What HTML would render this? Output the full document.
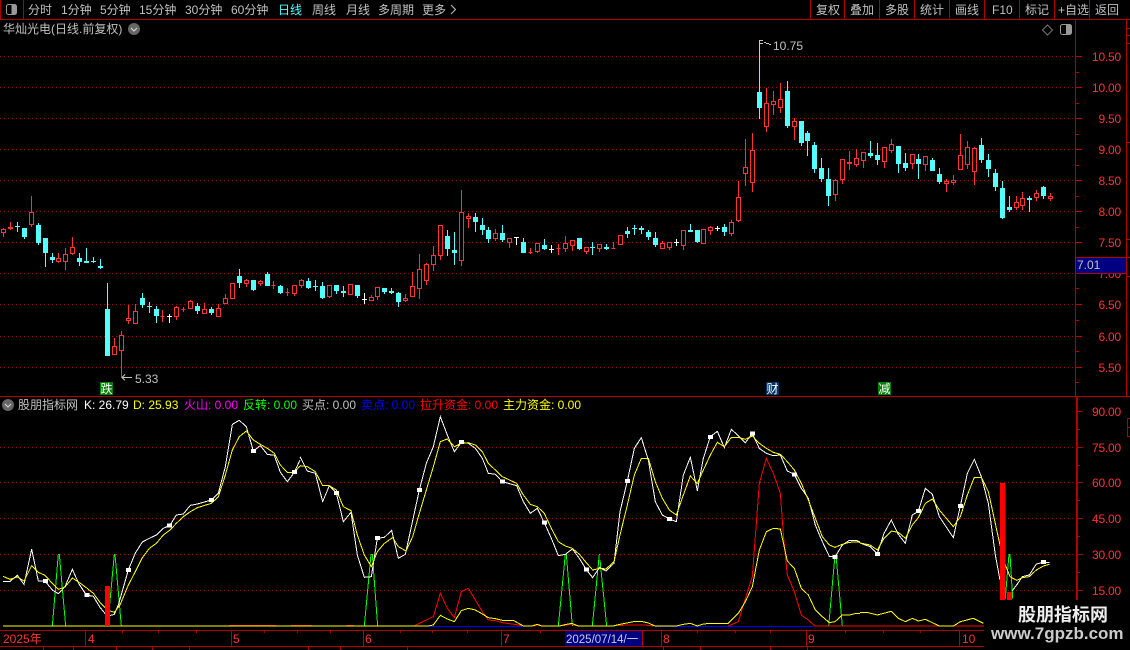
<!DOCTYPE html>
<html lang="zh">
<head>
<meta charset="utf-8">
<title>华灿光电</title>
<style>
html,body{margin:0;padding:0;background:#000;width:1130px;height:650px;overflow:hidden}
svg{display:block}
text{font-family:"Liberation Sans","WenQuanYi Zen Hei","Noto Sans CJK SC",sans-serif;font-size:12px;fill:#c0c0c0}
.tb{font-size:12px}
.rb{font-size:12px}
.ax{fill:#ff3232;text-anchor:end;letter-spacing:-.2px}
.l{fill:none;stroke-width:1;vector-effect:non-scaling-stroke}
.w{stroke:#fff}.y{stroke:#ff0}.r{stroke:#f00}.g{stroke:#0f0}.b{stroke:#00f}
.grid{stroke:#a00000;stroke-dasharray:1 3;fill:none}
.lab{font-size:12px}
</style>
</head>
<body>
<svg width="1130" height="650" viewBox="0 0 1130 650" xmlns="http://www.w3.org/2000/svg">
<rect width="1130" height="650" fill="#000"/>

<g shape-rendering="crispEdges">
<path class="grid" d="M0 56.5H1075M0 87.5H1075M0 118.5H1075M0 149.5H1075M0 180.5H1075M0 211.5H1075M0 242.5H1075M0 273.5H1075M0 304.5H1075M0 336.5H1075M0 367.5H1075"/>
<path class="grid" d="M0 447.5H1075M0 482.5H1075M0 518.5H1075M0 554.5H1075M0 590.5H1075"/>
<!-- frame -->
<path fill="none" stroke="#b00000" d="M0 19.5H1130M0.5 0V19M23.5 0V19M810.5 0V19M844.5 0V19M879.5 0V19M914.5 0V19M949.5 0V19M984.5 0V19M1019.5 0V19M1054.5 0V19M1089.5 0V19"/>
<path fill="none" stroke="#b00000" d="M1075.5 19V396M1126.5 19V396M0 396.5H1130M0 630.5H1130M0 646.5H1130"/>
<path fill="none" stroke="#b00000" stroke-width="2" d="M1077 396V630"/>
<path fill="none" stroke="#b00000" d="M1127 28.5h3M1127 35.5h3M1127 43.5h3M1127 142.5h3M1127 239.5h3M1127 257.5h3M1127 276.5h3M1127 418.5h3M1127 427.5h3M1127 436.5h3M1127.5 418V437"/>
<!-- axis ticks -->
<path fill="none" stroke="#b00000" d="M1076 56.5h6M1076 87.5h6M1076 118.5h6M1076 149.5h6M1076 180.5h6M1076 211.5h6M1076 242.5h6M1076 304.5h6M1076 336.5h6M1076 367.5h6M1076 72.5h3M1076 103.5h3M1076 134.5h3M1076 165.5h3M1076 196.5h3M1076 227.5h3M1076 288.5h3M1076 320.5h3M1076 351.5h3M1076 382.5h3"/>
<path fill="none" stroke="#b00000" d="M1078 411.5h5M1078 447.5h5M1078 482.5h5M1078 518.5h5M1078 554.5h5M1078 590.5h5M1078 429.5h2M1078 465.5h2M1078 500.5h2M1078 536.5h2M1078 572.5h2M1078 608.5h2"/>
<!-- time axis ticks -->
<path fill="none" stroke="#b00000" d="M85.5 630V646M231.5 630V646M363.5 630V646M501.5 630V646M661.5 630V646M806.5 630V646M959.5 630V646"/>
<path fill="none" stroke="#b00000" d="M122.5 630v3M158.5 630v3M196.5 630v3M264.5 630v3M297.5 630v3M330.5 630v3M400.5 630v3M432.5 630v3M467.5 630v3M540.5 630v3M575.5 630v3M642.5 630v16M697.5 630v3M735.5 630v3M770.5 630v3M845.5 630v3M883.5 630v3M920.5 630v3M43.5 646v4M73.5 646v4M116.5 646v4M152.5 646v4M189.5 646v4M308.5 646v4M340.5 646v4M407.5 646v4M663.5 646v4M700.5 646v4M770.5 646v4M807.5 646v4"/>

<!-- candles: white -->
<path fill="none" stroke="#fff" d="M169.5 314V323M167 316.5h5M364.5 293V304M362 299.5h5M516.5 237V245M514 237.5h5M551.5 245V253M549 249.5h5M676.5 239V246M674 242.5h5M717.5 226V231M715 228.5h5"/>

<!-- candles: cyan wicks -->
<path fill="none" stroke="#54ffff" d="M17.5 222V232M24.5 228V239M38.5 223V245M45.5 238V267M52.5 253V263M79.5 253V266M86.5 248V263M93.5 257V263M100.5 259V269M107.5 283V356M142.5 293V308M149.5 302V313M156.5 306V323M197.5 303V314M211.5 307V315M239.5 269V288M253.5 280V291M267.5 272V286M280.5 285V294M308.5 278V289M315.5 280V291M322.5 282V299M336.5 285V294M343.5 286V297M357.5 285V298M384.5 288V294M391.5 288V294M398.5 292V307M447.5 230V256M454.5 232V265M475.5 213V232M482.5 218V235M488.5 227V243M502.5 225V242M523.5 238V253M544.5 239V250M579.5 238V250M592.5 242V255M606.5 244V250M627.5 227V238M634.5 225V235M641.5 226V234M648.5 230V240M655.5 232V247M690.5 224V232M697.5 230V243M724.5 224V236M759.5 40V119M787.5 81V128M801.5 121V146M807.5 131V156M814.5 142V173M821.5 158V182M828.5 168V206M870.5 141V158M877.5 143V165M898.5 146V173M905.5 153V171M918.5 154V179M932.5 158V171M939.5 168V184M981.5 138V163M988.5 154V177M995.5 169V191M1002.5 181V219M1009.5 196V212M1029.5 196V212M1043.5 186V199"/>
<!-- candles: cyan bodies -->
<path fill="#54ffff" d="M15 226h5v1h-5zM22 228h5v9h-5zM36 225h5v18h-5zM43 238h5v15h-5zM50 257h5v3h-5zM77 258h5v4h-5zM84 261h5v2h-5zM91 261h5v1h-5zM98 266h5v2h-5zM105 309h5v47h-5zM140 298h5v7h-5zM147 306h5v1h-5zM154 309h5v7h-5zM195 306h5v5h-5zM209 309h5v4h-5zM237 276h5v7h-5zM251 280h5v10h-5zM265 274h5v12h-5zM278 286h5v7h-5zM306 281h5v7h-5zM313 286h5v1h-5zM320 286h5v12h-5zM334 285h5v6h-5zM341 291h5v2h-5zM355 285h5v11h-5zM382 288h5v4h-5zM389 291h5v2h-5zM396 293h5v9h-5zM445 236h5v13h-5zM452 250h5v3h-5zM473 217h5v5h-5zM480 225h5v5h-5zM486 230h5v9h-5zM500 233h5v7h-5zM521 242h5v11h-5zM542 245h5v4h-5zM577 238h5v11h-5zM590 247h5v1h-5zM604 247h5v2h-5zM625 231h5v3h-5zM632 228h5v1h-5zM639 228h5v2h-5zM646 232h5v5h-5zM653 238h5v7h-5zM688 230h5v2h-5zM695 230h5v12h-5zM722 227h5v5h-5zM757 92h5v16h-5zM785 91h5v35h-5zM799 121h5v22h-5zM805 133h5v8h-5zM812 145h5v24h-5zM819 168h5v11h-5zM826 179h5v17h-5zM868 153h5v3h-5zM875 155h5v5h-5zM896 146h5v18h-5zM903 163h5v5h-5zM916 159h5v5h-5zM930 160h5v11h-5zM937 174h5v8h-5zM979 145h5v15h-5zM986 160h5v9h-5zM993 173h5v14h-5zM1000 188h5v30h-5zM1007 207h5v3h-5zM1027 198h5v2h-5zM1041 187h5v9h-5z"/>

<!-- candles: red wicks -->
<path fill="none" stroke="#ff3232" d="M3.5 228V237M10.5 222V230M31.5 196V227M58.5 253V263M65.5 248V270M72.5 237V255M114.5 338V355M121.5 331V378M128.5 305V324M135.5 304V324M162.5 310V322M176.5 306V320M183.5 307V312M190.5 300V309M204.5 303V314M218.5 304V317M225.5 294V304M232.5 283V299M246.5 279V287M260.5 280V286M273.5 281V289M287.5 288V296M294.5 285V296M301.5 279V288M329.5 285V298M350.5 284V295M371.5 295V301M377.5 287V300M405.5 294V302M412.5 272V297M419.5 254V299M426.5 263V285M433.5 246V271M440.5 225V260M461.5 190V266M468.5 213V228M495.5 229V241M509.5 238V248M530.5 248V254M537.5 243V253M558.5 244V255M565.5 236V252M572.5 240V251M586.5 247V254M599.5 244V252M613.5 242V249M620.5 235V245M662.5 241V249M669.5 242V250M683.5 230V250M703.5 229V244M710.5 226V235M731.5 220V236M738.5 181V222M745.5 139V186M752.5 133V192M766.5 88V132M773.5 91V115M780.5 83V113M794.5 118V140M835.5 179V201M842.5 159V184M849.5 151V170M856.5 149V167M863.5 152V168M884.5 147V168M891.5 139V153M912.5 154V169M925.5 156V171M946.5 179V192M953.5 175V185M960.5 134V170M967.5 141V169M974.5 147V185M1016.5 196V210M1022.5 192V210M1036.5 190V201M1050.5 193V201"/>
<!-- candles: red bodies -->
<path fill="#000" stroke="#ff3232" d="M1.5 229.5h4v3h-4zM8.5 227.5h4v1h-4zM29.5 212.5h4v12h-4zM56.5 258.5h4v3h-4zM63.5 254.5h4v7h-4zM70.5 247.5h4v6h-4zM112.5 346.5h4v8h-4zM119.5 335.5h4v15h-4zM126.5 318.5h4v2h-4zM133.5 311.5h4v12h-4zM160.5 316.5h4v0h-4zM174.5 307.5h4v9h-4zM181.5 309.5h4v0h-4zM188.5 301.5h4v7h-4zM202.5 309.5h4v4h-4zM216.5 308.5h4v8h-4zM223.5 298.5h4v5h-4zM230.5 283.5h4v15h-4zM244.5 280.5h4v3h-4zM258.5 281.5h4v2h-4zM271.5 285.5h4v0h-4zM285.5 292.5h4v0h-4zM292.5 285.5h4v8h-4zM299.5 280.5h4v5h-4zM327.5 285.5h4v11h-4zM348.5 284.5h4v10h-4zM369.5 297.5h4v3h-4zM375.5 287.5h4v9h-4zM403.5 298.5h4v2h-4zM410.5 286.5h4v10h-4zM417.5 269.5h4v19h-4zM424.5 264.5h4v16h-4zM431.5 255.5h4v9h-4zM438.5 225.5h4v30h-4zM459.5 212.5h4v48h-4zM466.5 216.5h4v2h-4zM493.5 233.5h4v5h-4zM507.5 238.5h4v4h-4zM528.5 252.5h4v0h-4zM535.5 243.5h4v8h-4zM556.5 248.5h4v0h-4zM563.5 243.5h4v5h-4zM570.5 240.5h4v5h-4zM584.5 247.5h4v4h-4zM597.5 244.5h4v4h-4zM611.5 248.5h4v0h-4zM618.5 235.5h4v9h-4zM660.5 243.5h4v5h-4zM667.5 242.5h4v5h-4zM681.5 230.5h4v15h-4zM701.5 229.5h4v14h-4zM708.5 227.5h4v3h-4zM729.5 222.5h4v11h-4zM736.5 197.5h4v23h-4zM743.5 167.5h4v6h-4zM750.5 150.5h4v32h-4zM764.5 103.5h4v23h-4zM771.5 101.5h4v3h-4zM778.5 99.5h4v8h-4zM792.5 121.5h4v5h-4zM833.5 180.5h4v14h-4zM840.5 159.5h4v20h-4zM847.5 162.5h4v1h-4zM854.5 158.5h4v6h-4zM861.5 152.5h4v8h-4zM882.5 147.5h4v14h-4zM889.5 144.5h4v6h-4zM910.5 154.5h4v9h-4zM923.5 156.5h4v8h-4zM944.5 181.5h4v2h-4zM951.5 180.5h4v2h-4zM958.5 155.5h4v14h-4zM965.5 147.5h4v17h-4zM972.5 148.5h4v23h-4zM1014.5 202.5h4v5h-4zM1020.5 198.5h4v7h-4zM1034.5 193.5h4v4h-4zM1048.5 196.5h4v2h-4z"/>

<!-- 7.01 current price box -->
<text class="ax" x="1121" y="278">7.00</text>
<rect x="1075.5" y="257.5" width="51" height="16" fill="#000080" stroke="#b00000"/>

<!-- signal tags -->
<rect x="100" y="382" width="13" height="13" fill="#008000"/>
<rect x="766" y="382" width="13" height="13" fill="#003366"/>
<rect x="878" y="382" width="13" height="13" fill="#008000"/>

<!-- price callouts -->
<path fill="none" stroke="#c0c0c0" d="M760 40.5h3M760 43.5h3M764 42.5h2M766 43.5h3M769 44.5h2"/>
<path fill="none" stroke="#c0c0c0" d="M122 377.5h10M122 377.5l3-3M122 377.5l3 3"/>

<!-- lower panel: segment 1 -->
<g transform="translate(0,395) scale(.33333)">
<polyline class="l g" points="157,693 175,478 178,478 197,693"/>
<polyline class="l g" points="323,693 343,478 345,478 364,693"/>
<path class="l r" d="M687 691H750M750 691H830M873 691H900"/>
<polyline class="l y" points="9,693 900,693"/>
<polyline class="l w" points="9,559 30,559 52,541 72,568 95,463 115,558 135,558 157,585 175,596 195,575 217,523 237,567 259,600 280,604 300,637 322,664 343,658 355,630 385,525 406,474 427,441 448,430 469,420 490,400 510,391 529,360 550,357 571,331 592,327 634,315 655,295 676,215 697,88 718,76 739,95 760,168 781,152 802,178 823,181 841,232 862,260 883,232 900,195"/>
<polyline class="l y" points="9,544 30,553 52,546 72,558 95,512 115,532 135,541 157,565 175,583 195,576 217,549 237,562 259,578 280,595 300,622 322,645 343,652 360,630 385,570 406,530 427,488 448,460 469,445 490,420 510,405 529,385 550,365 571,350 592,338 634,325 655,305 676,240 697,165 718,125 739,108 760,135 781,148 802,160 823,175 841,210 862,232 883,232 900,213"/>
<path fill="#fff" d="M129 552h15v12h-15zM253 594h15v12h-15zM378 519h15v12h-15zM501 386h15v12h-15zM627 309h15v12h-15zM753 162h15v12h-15zM876 225h15v12h-15z"/>
<rect x="315" y="573" width="15" height="120" fill="#f00"/>
</g>

<!-- lower panel: segment 2 -->
<g transform="translate(300,395) scale(.33333)">
<polyline class="l g" points="193,693 213,478 217,478 233,693"/>
<polyline class="l g" points="775,693 796,478 799,478 817,693"/>
<polyline class="l g" points="877,693 898,478 900,478"/>
<path class="l r" d="M0 691H35M140 691H160"/>
<polyline class="l r" points="342,693 400,665 421,595 442,640 463,668 484,590 505,580 526,615 547,650 565,675 586,677 607,683 650,689 670,693 700,693 712,690 725,693 778,693 800,690 815,688 830,693"/>
<polyline class="l b" points="385,694 670,694"/>
<polyline class="l y" points="0,693 385,693 400,690 421,661 442,672 463,680 484,647 505,640 526,645 547,657 565,668 586,671 607,676 640,676 670,693 695,693 712,688 725,693 778,693 800,688 815,685 835,693 900,693"/>
<polyline class="l w" points="0,185 22,228 46,235 68,320 88,272 109,294 130,380 153,352 172,480 193,547 214,545 232,430 253,427 275,406 295,490 316,478 358,285 379,205 400,155 421,65 442,120 463,170 484,142 505,145 526,160 547,190 565,235 586,238 607,260 650,272 670,320 691,355 712,340 733,383 754,430 775,482 796,478 817,462 838,490 859,524 878,548 900,515"/>
<polyline class="l y" points="0,212 22,215 46,230 68,272 88,272 109,285 130,335 153,347 172,420 193,480 214,515 232,470 253,445 278,428 295,455 318,468 338,425 358,355 379,285 400,215 421,140 442,132 463,155 484,145 505,143 526,150 547,170 565,205 586,225 607,245 650,265 670,300 691,328 712,335 733,355 754,400 775,440 796,453 817,460 838,478 859,503 878,525 900,520"/>
<path fill="#fff" d="M102 288h15v12h-15zM225 423h15v12h-15zM351 279h15v12h-15zM477 135h15v12h-15zM600 254h15v12h-15zM726 377h15v12h-15zM852 518h15v12h-15z"/>
</g>

<!-- lower panel: segment 3 -->
<g transform="translate(600,395) scale(.33333)">
<polyline class="l g" points="0,495 20,693"/>
<polyline class="l g" points="686,693 705,480 708,480 727,693"/>
<polyline class="l b" points="165,694 640,694"/>
<polyline class="l r" points="55,692 75,690 135,690 160,693"/>
<polyline class="l r" points="385,693 415,680 436,610 457,545 478,265 499,190 520,235 541,295 551,430 562,540 583,590 604,660 625,675 645,693 780,693"/>
<polyline class="l y" points="0,693 40,693 60,688 100,680 124,679 145,684 165,693 230,693 250,688 271,685 292,693 310,687 331,685 360,685 385,685 415,655 436,620 457,575 478,465 499,410 520,400 541,402 562,498 583,520 604,580 625,600 646,645 667,665 688,683 705,680 727,660 748,660 769,655 780,655"/>
<polyline class="l w" points="0,518 18,528 42,505 60,350 82,258 103,160 124,128 145,195 166,320 187,360 208,372 229,380 250,240 271,187 292,287 310,190 331,125 352,109 373,158 394,103 415,122 436,143 457,116 478,160 499,175 520,182 541,180 562,228 583,238 604,280 625,310 646,390 667,440 688,484 705,486 727,450 748,436 769,436 780,441"/>
<polyline class="l y" points="0,520 18,522 42,500 60,420 82,330 103,240 124,190 145,190 166,260 187,310 208,345 229,360 250,300 271,243 292,265 310,225 331,180 352,142 373,155 394,127 415,127 436,133 457,123 478,145 499,160 520,172 541,178 562,200 583,225 604,265 625,315 646,370 667,425 688,450 705,457 727,448 748,442 769,441 780,442"/>
<path fill="#fff" d="M75 252h15v12h-15zM201 366h15v12h-15zM324 120h15v12h-15zM450 109h15v12h-15zM576 232h15v12h-15zM698 480h15v12h-15z"/>
</g>

<!-- lower panel: segment 4 -->
<g transform="translate(860,395) scale(.33333)">
<polyline class="l r" points="0,693 372,693"/>
<polyline class="l g" points="436,610 447,478 450,478 458,610"/>
<polyline class="l y" points="0,652 20,652 52,660 94,649 115,670 136,680 157,670 175,678 196,673 238,693 280,693 301,680 340,670 370,685"/>
<polyline class="l w" points="0,444 30,455 52,477 72,415 94,375 115,418 136,445 157,360 175,349 196,280 217,298 238,365 280,428 301,333 322,235 343,193 364,245 385,325 406,480 420,555"/>
<polyline class="l w" points="457,587 470,570 487,545 508,540 529,507 550,502 568,503"/>
<polyline class="l y" points="0,444 30,450 52,465 72,430 94,408 115,412 136,430 157,390 175,368 196,325 217,312 238,345 280,395 301,365 322,300 343,247 364,247 385,290 420,450 436,510 450,545 470,556 487,548 508,545 529,525 550,513 568,508"/>
<path fill="#fff" d="M45 471h15v12h-15zM168 342h15v12h-15zM294 327h15v12h-15zM543 495h15v12h-15z"/>
<rect x="420" y="264" width="16" height="360" fill="#f00"/>
<rect x="441" y="591" width="15" height="40" fill="#f00"/>
</g>

<!-- date box -->
<rect x="565" y="631" width="77" height="15" fill="#000080"/>
</g>

<!-- icons -->
<rect x="6.500" y="4.500" width="10" height="10" rx="2" fill="#000" stroke="#999"/>
<rect x="11.500" y="5" width="4.500" height="9" fill="#999"/>
<rect x="1060.5" y="24.5" width="11" height="10" rx="2" fill="#000" stroke="#999"/>
<rect x="1066" y="25" width="5" height="9" fill="#999"/>
<path d="M1047.5 25l5 5-5 5-5-5z" fill="none" stroke="#777"/>
<circle cx="134" cy="29" r="6" fill="#666"/>
<path d="M131 28l3 3 3-3" fill="none" stroke="#ddd"/>
<circle cx="8" cy="405" r="6" fill="#666"/>
<path d="M5 404l3 3 3-3" fill="none" stroke="#ddd"/>
<path d="M451 5l4.500 4.500-4.500 4.500" fill="none" stroke="#c0c0c0"/>

<!-- top toolbar -->
<text class="tb" x="28" y="14">分时</text>
<text class="tb" x="61" y="14">1分钟</text>
<text class="tb" x="100" y="14">5分钟</text>
<text class="tb" x="139" y="14">15分钟</text>
<text class="tb" x="185" y="14">30分钟</text>
<text class="tb" x="231" y="14">60分钟</text>
<text class="tb" x="278" y="14" style="fill:#54ffff">日线</text>
<text class="tb" x="312" y="14">周线</text>
<text class="tb" x="346" y="14">月线</text>
<text class="tb" x="378" y="14">多周期</text>
<text class="tb" x="422" y="14">更多</text>

<text class="rb" x="816" y="14">复权</text>
<text class="rb" x="850" y="14">叠加</text>
<text class="rb" x="885" y="14">多股</text>
<text class="rb" x="920" y="14">统计</text>
<text class="rb" x="955" y="14">画线</text>
<text class="rb" x="992" y="14">F10</text>
<text class="rb" x="1025" y="14">标记</text>
<text class="rb" x="1058" y="14">+自选</text>
<text class="rb" x="1095" y="14">返回</text>

<text class="tb" x="3" y="33">华灿光电(日线.前复权)</text>

<!-- main axis labels -->
<text class="ax" x="1121" y="61">10.50</text>
<text class="ax" x="1121" y="92">10.00</text>
<text class="ax" x="1121" y="123">9.50</text>
<text class="ax" x="1121" y="154">9.00</text>
<text class="ax" x="1121" y="185">8.50</text>
<text class="ax" x="1121" y="216">8.00</text>
<text class="ax" x="1121" y="247">7.50</text>
<text class="ax" x="1121" y="309">6.50</text>
<text class="ax" x="1121" y="341">6.00</text>
<text class="ax" x="1121" y="372">5.50</text>
<text x="1077" y="269" style="fill:#c0c0c0">7.01</text>

<text x="773" y="50">10.75</text>
<text x="135" y="383">5.33</text>

<text x="100.500" y="393" style="fill:#fff">跌</text>
<text x="766.500" y="393" style="fill:#fff">财</text>
<text x="878.500" y="393" style="fill:#fff">减</text>

<!-- lower header -->
<text class="lab" x="18" y="409">股朋指标网</text>
<text class="lab" x="84" y="409" style="fill:#fff">K: 26.79</text>
<text class="lab" x="133" y="409" style="fill:#ff0">D: 25.93</text>
<text class="lab" x="184" y="409" style="fill:#f0f">火山: 0.00</text>
<text class="lab" x="243" y="409" style="fill:#0f0">反转: 0.00</text>
<text class="lab" x="302" y="409" style="fill:#c0c0c0">买点: 0.00</text>
<text class="lab" x="361" y="409" style="fill:#00f">卖点: 0.00</text>
<text class="lab" x="420" y="409" style="fill:#f00">拉升资金: 0.00</text>
<text class="lab" x="503" y="409" style="fill:#ff0">主力资金: 0.00</text>

<!-- lower axis labels -->
<text class="ax" x="1121" y="416">90.00</text>
<text class="ax" x="1121" y="452">75.00</text>
<text class="ax" x="1121" y="487">60.00</text>
<text class="ax" x="1121" y="523">45.00</text>
<text class="ax" x="1121" y="559">30.00</text>
<text class="ax" x="1121" y="595">15.00</text>

<!-- time axis labels -->
<text x="3" y="643" style="fill:#ff3232">2025年</text>
<text x="88" y="643" style="fill:#ff3232">4</text>
<text x="233" y="643" style="fill:#ff3232">5</text>
<text x="365" y="643" style="fill:#ff3232">6</text>
<text x="503" y="643" style="fill:#ff3232">7</text>
<text x="663" y="643" style="fill:#ff3232">8</text>
<text x="808" y="643" style="fill:#ff3232">9</text>
<text x="962" y="643" style="fill:#ff3232">10</text>
<text x="566" y="643" style="fill:#c8c8e8;font-size:11.5px">2025/07/14/一</text>

<!-- watermark -->
<rect x="984" y="600" width="146" height="50" fill="#000"/>
<text x="1018" y="621" style="font-size:18px;font-weight:bold;fill:#eee">股朋指标网</text>
<text x="991" y="639" style="font-size:17px;font-weight:bold;fill:#ccc">www.7gpzb.com</text>
</svg>
</body>
</html>
